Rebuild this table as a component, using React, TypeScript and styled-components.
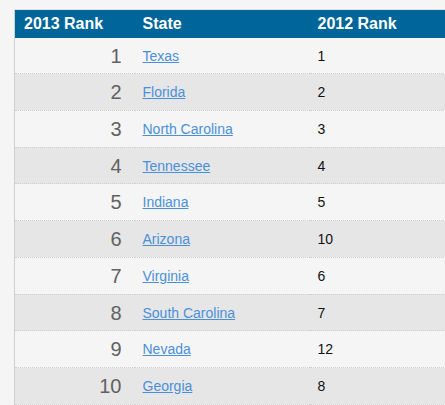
import React from "react";
import styled, { createGlobalStyle } from "styled-components";

const Global = createGlobalStyle`
  html, body { margin: 0; padding: 0; background: #f5f5f5; overflow: hidden; }
  body { font-family: "Liberation Sans", Arial, Helvetica, sans-serif; }
`;

const Page = styled.div`
  padding: 9px 0 0 14px;
  width: 600px;
`;

const Table = styled.table`
  width: 560px;
  border-collapse: collapse;
  table-layout: fixed;
  border-top: 1px solid #e2e2e2;
  border-left: 1px solid #cfcfcf;
`;

const HeadCell = styled.th<{ $w?: number }>`
  ${(p) => (p.$w ? `width: ${p.$w}px;` : "")}
  background: #006699;
  color: #fff;
  font-size: 16px;
  font-weight: bold;
  text-align: left;
  height: 28.7px;
  padding: 0 0 0 8px;
  box-sizing: border-box;
  vertical-align: middle;
  line-height: 18px;
  &:first-child { padding-left: 9px; }
`;

const Row = styled.tr<{ $alt: boolean }>`
  background: ${(p) => (p.$alt ? "#e6e6e6" : "#f5f5f5")};
  & > td {
    height: 36.75px;
    border-bottom: 1px dotted #cfcfcf;
  }
  &:first-child > td { height: 35.5px; }
`;

const RankCell = styled.td`
  text-align: right;
  padding: 0 13px 0 0;
  font-size: 20px;
  color: #616161;
  vertical-align: middle;
  box-sizing: border-box;
  line-height: 22px;
`;

const StateCell = styled.td`
  padding: 0 0 0 8px;
  vertical-align: middle;
  font-size: 14px;
  line-height: 16px;
  box-sizing: border-box;
`;

const StateLink = styled.a`
  color: #4a90d9;
  text-decoration: underline;
`;

const PrevCell = styled.td`
  padding: 0 0 0 8px;
  vertical-align: middle;
  font-size: 14px;
  line-height: 16px;
  color: #111;
  box-sizing: border-box;
`;

const data: [number, string, number][] = [
  [1, "Texas", 1],
  [2, "Florida", 2],
  [3, "North Carolina", 3],
  [4, "Tennessee", 4],
  [5, "Indiana", 5],
  [6, "Arizona", 10],
  [7, "Virginia", 6],
  [8, "South Carolina", 7],
  [9, "Nevada", 12],
  [10, "Georgia", 8],
];

export default function App() {
  return (
    <Page>
      <Global />
      <Table>
        <thead>
          <tr>
            <HeadCell $w={120}>2013 Rank</HeadCell>
            <HeadCell $w={175}>State</HeadCell>
            <HeadCell>2012 Rank</HeadCell>
          </tr>
        </thead>
        <tbody>
          {data.map(([r, s, p], i) => (
            <Row key={r} $alt={i % 2 === 1}>
              <RankCell>{r}</RankCell>
              <StateCell>
                <StateLink href="#">{s}</StateLink>
              </StateCell>
              <PrevCell>{p}</PrevCell>
            </Row>
          ))}
        </tbody>
      </Table>
    </Page>
  );
}
